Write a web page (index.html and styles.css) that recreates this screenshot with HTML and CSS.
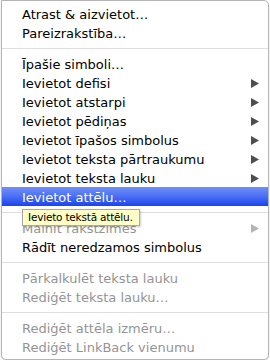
FILE: index.html
```html
<!DOCTYPE html>
<html>
<head>
<meta charset="utf-8">
<link rel="stylesheet" href="styles.css">
</head>
<body>
<div class="menu">
  <div class="item">Atrast &amp; aizvietot…</div>
  <div class="item">Pareizrakstība…</div>
  <div class="sep"></div>
  <div class="item">Īpašie simboli…</div>
  <div class="item sub">Ievietot defisi<svg class="arrow" viewBox="0 0 8 9"><polygon points="0,0 8,4.5 0,9"/></svg></div>
  <div class="item sub">Ievietot atstarpi<svg class="arrow" viewBox="0 0 8 9"><polygon points="0,0 8,4.5 0,9"/></svg></div>
  <div class="item sub">Ievietot pēdiņas<svg class="arrow" viewBox="0 0 8 9"><polygon points="0,0 8,4.5 0,9"/></svg></div>
  <div class="item sub">Ievietot īpašos simbolus<svg class="arrow" viewBox="0 0 8 9"><polygon points="0,0 8,4.5 0,9"/></svg></div>
  <div class="item sub">Ievietot teksta pārtraukumu<svg class="arrow" viewBox="0 0 8 9"><polygon points="0,0 8,4.5 0,9"/></svg></div>
  <div class="item sub">Ievietot teksta lauku<svg class="arrow" viewBox="0 0 8 9"><polygon points="0,0 8,4.5 0,9"/></svg></div>
  <div class="item active">Ievietot attēlu…</div>
  <div class="sep"></div>
  <div class="item sub disabled">Mainīt rakstzīmes<svg class="arrow" viewBox="0 0 8 9"><polygon points="0,0 8,4.5 0,9"/></svg></div>
  <div class="item">Rādīt neredzamos simbolus</div>
  <div class="sep"></div>
  <div class="item disabled">Pārkalkulēt teksta lauku</div>
  <div class="item disabled">Rediģēt teksta lauku…</div>
  <div class="sep"></div>
  <div class="item disabled">Rediģēt attēla izmēru…</div>
  <div class="item disabled">Rediģēt LinkBack vienumu</div>
  <div class="tooltip">Ievieto tekstā attēlu.</div>
</div>
</body>
</html>
```
FILE: styles.css
```css
html, body {
  margin: 0;
  padding: 0;
  background: #ffffff;
}
body {
  font-family: "DejaVu Sans", "Liberation Sans", sans-serif;
  font-size: 13px;
  color: #000;
}
.menu {
  position: relative;
  box-sizing: border-box;
  margin-left: 1px;
  width: 268px;
  padding: 3px 0 3px;
  background: #fff;
  border: 1px solid #b4b4b4;
  border-radius: 0 5px 5px 5px;
  box-shadow: 0 1px 2px rgba(0,0,0,0.15);
}
.item {
  box-sizing: border-box;
  display: flex;
  align-items: center;
  justify-content: space-between;
  height: 19px;
  line-height: 19px;
  padding: 1px 9px 0 20px;
  white-space: nowrap;
}
.arrow {
  width: 8px;
  height: 9px;
  fill: #4e4e4e;
}
.disabled {
  color: #949494;
}
.disabled .arrow {
  fill: #b4b4b4;
}
.active {
  color: #fff;
  background: linear-gradient(#6f90f7, #4a6ef4 50%, #1b42ef);
}
.sep {
  height: 1px;
  margin: 6px 0 5px;
  background: #dedede;
}
.tooltip {
  position: absolute;
  left: 20px;
  top: 208px;
  box-sizing: border-box;
  width: 118px;
  height: 17px;
  padding: 0 0 0 5px;
  background: #ffffc7;
  border: 1px solid #a9a9a0;
  font-size: 10.5px;
  letter-spacing: -0.2px;
  line-height: 15px;
  color: #000;
  box-shadow: 1px 1px 2px rgba(0,0,0,0.2);
  white-space: nowrap;
}
```
